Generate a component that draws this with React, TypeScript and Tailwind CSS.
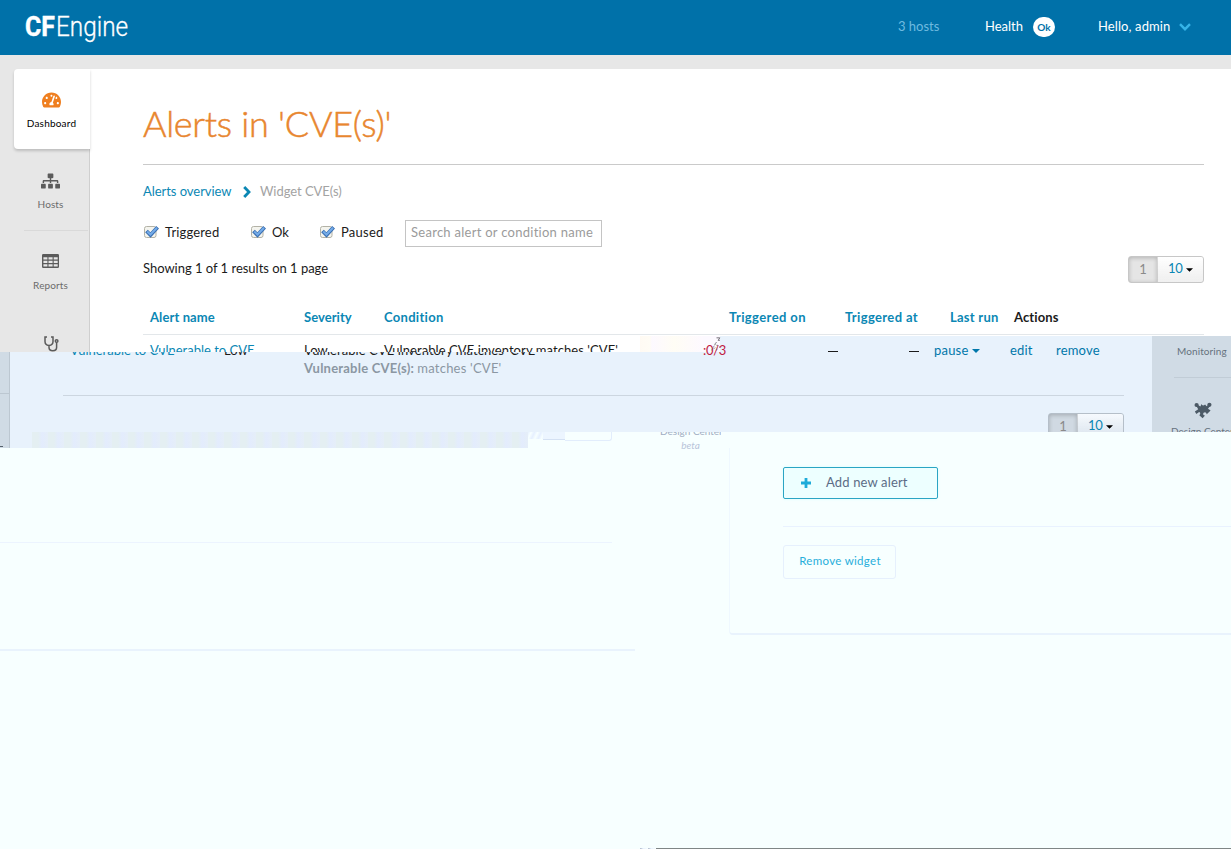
import React from "react";
import { FaSitemap, FaTachometerAlt } from "react-icons/fa";

const link = "text-[#0b87b4]";

function Caret({ className }: { className: string }) {
  return (
    <svg viewBox="0 0 8 4" className={className} fill="currentColor">
      <path d="M0 0h8L4 4z" />
    </svg>
  );
}

function TableIcon() {
  return (
    <svg viewBox="0 0 17 14" className="h-[14px] w-[17px]" fill="#5b5b5b">
      <path
        fillRule="evenodd"
        d="M1.3 0h14.4Q17 0 17 1.3v11.4Q17 14 15.7 14H1.3Q0 14 0 12.700V1.300Q0 0 1.300 0zM1.400 3.200v2.400h4V3.200zm5.100 0v2.400h4.100V3.200zm5.200 0v2.400h4V3.200zM1.400 6.700v2.300h4V6.700zm5.100 0v2.300h4.100V6.700zm5.200 0v2.300h4V6.700zM1.400 10.200v2.400h4v-2.400zm5.100 0v2.400h4.100v-2.400zm5.200 0v2.400h4v-2.400z"
      />
    </svg>
  );
}

function StethoscopeIcon() {
  return (
    <svg viewBox="0 0 15 16" className="h-[16px] w-[15px] shrink-0" fill="none" stroke="#5b5b5b" strokeWidth="1.500">
      <path d="M3 1H1v4.500q0 3.700 4 3.900 4-.2 4-3.900V1H7M5 9.400v2.200q0 3.200 3.800 3.200t3.800-3.200V6.500" />
      <circle cx="12.600" cy="5" r="1.300" />
    </svg>
  );
}

function PuzzleIcon() {
  return (
    <svg viewBox="0 0 18 17" className="h-[17px] w-[18px]" fill="#4c5a66">
      <circle cx="2.600" cy="3" r="2.100" />
      <circle cx="15.400" cy="2.800" r="2.100" />
      <path d="M3.200 2.500l3.200 1.900L7.500 2q.8 2.600 3.600.6l1.500 1.600 2-1.700 1.600 1.300-2.200 3 2.600 1.800-3.800 3.600q-.9-3-3.200-1.500-1.400 2.300 1.400 2.800L8.600 16.200 5.300 13.300q2-2.200-.2-3.200L2.300 12 .9 9.600l3.300-2.300-1.700-3z" />
    </svg>
  );
}

function Check() {
  return (
    <svg viewBox="0 0 16 14" className="mt-[-2px] h-[14px] w-[16px]">
      <rect x="1.500" y="1.500" width="11.500" height="11" rx="2" fill="#f4f4ee" stroke="#b3b2a6" />
      <path d="M3.500 6l4 4L14.600 2.200" fill="none" stroke="#3a6fb2" strokeWidth="3.800" />
      <path d="M4.200 6.400l3.300 3.100L14 2.700" fill="none" stroke="#74abe8" strokeWidth="2" />
    </svg>
  );
}

function Pager({ className }: { className: string }) {
  return (
    <div className={"flex h-[27px] w-[76px] overflow-hidden rounded-[3px] border text-[13px] leading-[24px] " + className}>
      <span className="w-[28px] bg-black/10 text-center text-[#8a8a8a] shadow-[inset_0_1px_4px_rgba(0,0,0,0.22)]">1</span>
      <span className="flex flex-1 items-center border-l border-black/15 bg-gradient-to-b from-white/60 to-black/5 pb-[3px] pl-[10px] tracking-[-0.4px] text-[#0b87b4]">
        10<Caret className="ml-[4px] mt-[3px] h-[4px] w-[7px] text-black" />
      </span>
    </div>
  );
}

function Header() {
  return (
    <header className="flex h-[55px] bg-[#0071a9] text-white">
      <div className="flex h-[55px] w-[872px] items-center whitespace-nowrap pb-[1px] pl-[25px] font-['Roboto',sans-serif] text-[27px] leading-[32px]">
        <span className="w-[31px] origin-left scale-x-[0.92] font-bold [-webkit-text-stroke:0.4px_white]">CF</span>
        <span className="origin-left scale-x-[0.9] font-light [-webkit-text-stroke:0.3px_white]">Engine</span>
      </div>
      <div className="flex h-[53px] flex-1 items-center whitespace-nowrap text-[13px]">
        <span className="ml-[26px] w-[87px] text-[#6fbbe0]">3 hosts</span>
        <span className="w-[48px]">Health</span>
        <span className="mr-[43px] mt-[1px] flex h-[20px] w-[22px] items-center justify-center rounded-full bg-white text-[10px] font-bold text-[#0071a9]">Ok</span>
        <span className="w-[81px] tracking-[0.1px]">Hello, admin</span>
        <svg viewBox="0 0 12 8" className="mt-[1px] h-[8px] w-[12px]" fill="none" stroke="#36b4e8" strokeWidth="2.400">
          <path d="M1 1.200l5 5 5-5" />
        </svg>
      </div>
    </header>
  );
}

function Sidebar() {
  return (
    <nav className="mt-[14px] flex w-[90px] flex-col border-r border-[#cfcfcf] bg-[#e7e7e7] pl-[14px] text-[10px] tracking-[0.1px] text-[#6b6b6b]">
      <div className="relative z-10 flex h-[80px] w-[76px] flex-col items-center rounded-l-[4px] bg-white pr-[1px] pt-[22px] text-black shadow-[0_2px_3px_rgba(0,0,0,0.18)]">
        <FaTachometerAlt className="h-[18px] w-[19px] text-[#ef7f20]" />
        <span className="mt-[7px] leading-[14px] tracking-[0.2px]">Dashboard</span>
      </div>
      <div className="ml-[10px] flex h-[82px] w-[64px] flex-col items-center border-b border-[#d9d9d9] pr-[11px] pt-[23px]">
        <FaSitemap className="h-[18px] w-[19px] text-[#5b5b5b]" />
        <span className="mt-[7px] leading-[14px]">Hosts</span>
      </div>
      <div className="flex h-[80px] w-[73px] flex-col items-center pt-[23px]">
        <TableIcon />
        <span className="mt-[10px] leading-[14px]">Reports</span>
      </div>
    </nav>
  );
}

function Main() {
  return (
    <main className="mt-[14px] flex flex-1 flex-col whitespace-nowrap bg-white pl-[53px] pr-[27px] text-[13px] text-[#1b1b1b]">
      <h1 className="flex h-[96px] items-center border-b border-[#cacaca] pt-[12px] text-[36px] font-light tracking-[-0.28px] text-[#e8862f] [-webkit-text-stroke:0.5px_#e8862f]">Alerts in 'CVE(s)'</h1>
      <div className="mt-[16px] flex h-[20px] items-center pt-[2px]">
        <a className={"w-[100px] tracking-[-0.05px] " + link}>Alerts overview</a>
        <svg viewBox="0 0 8 12" className="mr-[9px] h-[12px] w-[8px]" fill="none" stroke="#0b87b4" strokeWidth="2.800">
          <path d="M1.200 1l4.800 5-4.800 5" />
        </svg>
        <span className="tracking-[-0.05px] text-[#a3a3a3]">Widget CVE(s)</span>
      </div>
      <div className="mt-[19px] flex h-[27px] items-center pb-px">
        <label className="flex w-[107px] items-center gap-[6px] tracking-[0.15px]"><Check />Triggered</label>
        <label className="flex w-[69px] items-center gap-[6px]"><Check />Ok</label>
        <label className="flex w-[86px] items-center gap-[6px] tracking-[0.25px]"><Check />Paused</label>
        <div className="mt-px flex h-[27px] w-[197px] shrink-0 items-center border border-[#c4c4c4] pb-[2px] pl-[5px] tracking-[0.27px] text-[#9b9b9b]">Search alert or condition name</div>
      </div>
      <div className="mt-[9px] flex h-[27px] items-center justify-between">
        <span className="pb-[2px] tracking-[-0.02px]">Showing 1 of 1 results on 1 page</span>
        <Pager className="border-[#c7c7c7]" />
      </div>
      <div className="mt-[18px] flex h-[34px] items-center border-b border-[#e3e7ea] pl-[7px] font-bold text-[#0b87b4]">
        <span className="w-[154px] tracking-[0.1px]">Alert name</span>
        <span className="w-[80px] tracking-[0.05px]">Severity</span>
        <span className="w-[345px] tracking-[0.3px]">Condition</span>
        <span className="w-[116px] tracking-[0.4px]">Triggered on</span>
        <span className="w-[105px] tracking-[0.36px]">Triggered at</span>
        <span className="w-[64px] tracking-[0.25px]">Last run</span>
        <span className="tracking-[0.1px] text-[#1b1b1b]">Actions</span>
      </div>
    </main>
  );
}

function AlertRow() {
  return (
    <section className="relative z-10 flex h-[16px] whitespace-nowrap text-[13px] leading-[18px] text-[#1b1b1b]">
      <div className="flex w-[90px] justify-center overflow-hidden border-r border-[#cfcfcf] bg-[#e7e7e7] pl-[13px]">
        <StethoscopeIcon />
      </div>
      <div className="flex w-[550px] overflow-hidden bg-white pl-[60px] pt-[5px]">
        <a className={"w-[154px] shrink-0 " + link}>Vulnerable to CVE</a>
        <span className="w-[80px] shrink-0">Low</span>
        <span className="tracking-[0.08px]">Vulnerable CVE inventory matches 'CVE'</span>
      </div>
      <div className="w-[63px] bg-[linear-gradient(90deg,#fffaf3,#fffcf5_10px,#fdf9ff_12px,#fffdf5_34px,#fdf9ff)]" />
      <div className="w-[17px] bg-[#fcf9ff]">
        <div className="relative z-10 flex h-[21px] items-end leading-[14px] tracking-[-0.3px] text-[#c01c43]">
          <span>:0/3</span>
          <svg viewBox="0 0 16 18" className="absolute left-[4px] top-px h-[15px] w-[14px]" fill="none" stroke="#5d5961" strokeWidth="1">
            <path d="M11 1h4l-2 3h2" />
            <path d="M5 16l6-10M8 14l2-2m1 4l1-3m-1-3h2m1 2h1M9 8h1" strokeDasharray="1.500 1" />
          </svg>
        </div>
      </div>
      <div className="flex w-[432px] bg-[#e8f2fc] pt-[5px] text-[#0077aa]">
        <span className="w-[108px]" />
        <span className="w-[81px] text-[#1b1b1b]"><span className="inline-block h-px w-[10px] align-[3px] bg-[#1b1b1b]" /></span>
        <span className="w-[25px] text-[#1b1b1b]"><span className="inline-block h-px w-[10px] align-[3px] bg-[#1b1b1b]" /></span>
        <span className="flex h-[18px] w-[76px] items-center tracking-[0.2px]">pause<Caret className="ml-[3px] mt-[1px] h-[4px] w-[8px]" /></span>
        <span className="w-[46px] tracking-[0.2px]">edit</span>
        <span className="tracking-[0.2px]">remove</span>
      </div>
      <div className="w-[79px] bg-[#d0dbe5] pl-[25px] pt-[6px] text-[10px] tracking-[0.1px] text-[#66727d]">Monitoring</div>
    </section>
  );
}

function DetailBand() {
  return (
    <section className="flex h-[80px] whitespace-nowrap bg-[#e8f2fc] text-[13px] leading-[18px]">
      <div className="w-[10px] border-r border-[#bcc7d1] bg-[#d0dbe5] pt-[41px]">
        <div className="h-px bg-[#bcc7d1]" />
      </div>
      <div className="flex w-[1142px] flex-col pl-[53px] pr-[28px]">
        <div className="flex h-[7px] overflow-hidden pl-[7px] text-[#1b1b1b]">
          <a className={"mt-[-11px] w-[154px] shrink-0 " + link}>Vulnerable to CVE</a>
          <span className="mt-[-11px] w-[80px] shrink-0">Low</span>
          <span className="mt-[-11px] tracking-[0.08px]">Vulnerable CVE inventory matches 'CVE'</span>
        </div>
        <p className="h-[36px] pl-[241px] text-[#8b97a3]"><b className="tracking-[0.22px]">Vulnerable CVE(s):</b> <span className="tracking-[0.22px]">matches 'CVE'</span></p>
        <div className="h-px shrink-0 bg-[#ccd6e0]" />
        <div className="mt-[17px] flex h-[19px] justify-end overflow-hidden">
          <Pager className="shrink-0 border-[#b5bfc9]" />
        </div>
      </div>
      <div className="flex w-[79px] flex-col overflow-hidden bg-[#d0dbe5] text-[10px] text-[#66727d]">
        <div className="ml-[22px] mt-[25px] h-px shrink-0 bg-[#c1ccd6]" />
        <div className="ml-[42px] mt-[24px] h-[17px] shrink-0"><PuzzleIcon /></div>
        <span className="ml-[19px] mt-[3px] h-[18px] shrink-0">Design Center</span>
      </div>
    </section>
  );
}

function LowerEdge() {
  return (
    <section className="relative flex h-[16px] whitespace-nowrap text-[10px]">
      <div className="w-[10px] border-r border-[#bcc7d1] bg-[#d0dbe5] pt-[14px]">
        <div className="h-[1px] w-[3px] bg-[#55616c]" />
      </div>
      <div className="w-[22px] bg-[#e8f2fc]" />
      <div className="w-[496px] bg-[repeating-linear-gradient(90deg,#e4eff2_0,#e4eff2_6px,#e3ecfd_10px,#e5eef8_16px)]" />
      <div className="h-[7px] w-[15px] bg-[repeating-linear-gradient(115deg,#e6f0ff_0,#f7ffff_3px,#e6f0ff_6px)]" />
      <div className="h-[8px] w-[22px] border-b border-[#d4e1f3] bg-[#ecf5ff]" />
      <div className="mr-[48px] h-[9px] w-[47px] rounded-br-[3px] border-b border-r border-[#e2edfc]" />
      <div className="flex w-[61px] flex-col items-center text-[#a0adc2]">
        <div className="flex h-[6px] w-full shrink-0 overflow-hidden"><span className="mt-[-10px] leading-[18px]">Design Center</span></div>
        <span className="mt-[1px] italic leading-[12px] text-[#b8c4da]">beta</span>
      </div>
    </section>
  );
}

function WidgetActions() {
  return (
    <section className="flex h-[401px] whitespace-nowrap">
      <div className="flex h-[203px] w-[635px] flex-col border-b-2 border-[#e9f3fd] pt-[94px]">
        <div className="h-px w-[612px] bg-[#ecf4ff]" />
      </div>
      <div className="ml-[94px] flex h-[187px] flex-1 flex-col rounded-bl-[4px] border-b-2 border-l border-b-[#e9f3fd] border-l-[#eff8ff] pl-[53px] pt-[19px]">
        <button className="flex h-[32px] w-[155px] items-center rounded-[2px] border border-[#2ba5c4] bg-[#edffff] pl-[17px] text-[13px] tracking-[0.15px] text-[#5b6c86] shadow-[0_0_3px_#d5ffff]">
          <svg viewBox="0 0 10 10" className="mb-px mr-[15px] h-[10px] w-[10px]" fill="#1eabd9"><path d="M3.600 0h2.800v3.600H10v2.800H6.400V10H3.600V6.400H0V3.600h3.600z" /></svg>
          Add new alert
        </button>
        <div className="mt-[27px] h-px bg-[#e9f2ff]" />
        <button className="mt-[18px] flex h-[34px] w-[113px] items-center justify-center rounded-[3px] border border-[#e6f0fd] pb-[2px] pl-px text-[11.500px] tracking-[0.32px] text-[#27aedb]">Remove widget</button>
      </div>
    </section>
  );
}

export default function App() {
  return (
    <div className="h-[849px] w-[1231px] overflow-hidden bg-[#f7ffff] font-['Lato',sans-serif]">
      <Header />
      <div className="flex h-[281px] bg-[#e7e7e7]">
        <Sidebar />
        <Main />
      </div>
      <AlertRow />
      <DetailBand />
      <LowerEdge />
      <WidgetActions />
      <div className="mt-[-1px] flex h-[1px] pl-[640px]">
        <div className="w-[16px] bg-[repeating-linear-gradient(90deg,#b8c2d2_0,#b8c2d2_1px,#e8f2ff_3px,#f7ffff_8px)]" />
        <div className="flex-1 bg-[#7f8686]" />
      </div>
    </div>
  );
}
